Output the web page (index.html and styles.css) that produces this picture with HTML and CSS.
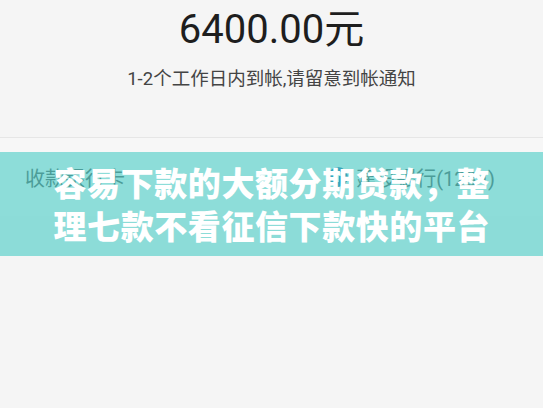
FILE: index.html
```
<!DOCTYPE html>
<html lang="zh">
<head>
<meta charset="utf-8">
<link rel="stylesheet" href="styles.css">
</head>
<body>
<div class="page">
  <section class="result">
    <div class="amount">6400.00元</div>
    <div class="note">1-2个工作日内到帐,请留意到帐通知</div>
  </section>
  <div class="row">
    <span class="label">收款银行卡</span>
    <span class="bank">
      <svg class="bank-icon" viewBox="0 0 20 20" width="20" height="20">
        <circle cx="10" cy="10" r="10" fill="#1f6fae"/>
        <path d="M6 5 H14 V9 H11 V15 H9 V9 H6 Z" fill="#ffffff"/>
      </svg>
      <span class="bank-name">建设银行(1234)</span>
    </span>
  </div>
  <div class="banner">
    <div class="banner-line">容易下款的大额分期贷款，整</div>
    <div class="banner-line">理七款不看征信下款快的平台</div>
  </div>
</div>
</body>
</html>
```
FILE: styles.css
```
html, body {
  margin: 0;
  padding: 0;
}
body {
  background: #f5f5f5;
  font-family: Roboto, "Noto Sans CJK SC", sans-serif;
  width: 543px;
  height: 408px;
  overflow: hidden;
}
.page {
  position: relative;
  width: 543px;
  height: 408px;
}
.result {
  display: flex;
  flex-direction: column;
  align-items: center;
  padding-top: 6px;
  padding-bottom: 45px;
  border-bottom: 1px solid #e6e6e6;
  box-shadow: 0 1px 1px rgba(0,0,0,0.02);
}
.amount {
  font-size: 40px;
  line-height: 48px;
  height: 48px;
  color: #1e1e1e;
}
.note {
  margin-top: 12px;
  font-size: 18.5px;
  line-height: 26px;
  height: 26px;
  color: #444;
}
.row {
  display: flex;
  align-items: center;
  justify-content: space-between;
  height: 78px;
  padding: 0 48px 0 25px;
  background: #f7f7f7;
  font-family: "Noto Sans CJK SC", Roboto, sans-serif;
  font-size: 20px;
  color: #555;
}
.bank {
  display: flex;
  align-items: center;
  gap: 8px;
}
.bank-name {
  font-family: Roboto, "Noto Sans CJK SC", sans-serif;
}
.bank-icon {
  display: block;
}
.banner {
  position: absolute;
  left: 0;
  top: 152px;
  width: 543px;
  height: 104px;
  box-sizing: border-box;
  padding-top: 9px;
  background: rgba(70, 203, 197, 0.6);
  display: flex;
  flex-direction: column;
  align-items: center;
}
.banner-line {
  width: 436px;
  font-family: "Noto Sans CJK SC", sans-serif;
  font-weight: 900;
  font-size: 33px;
  line-height: 43px;
  height: 43px;
  color: #ffffff;
  text-align: justify;
  text-align-last: justify;
  white-space: nowrap;
}
```
